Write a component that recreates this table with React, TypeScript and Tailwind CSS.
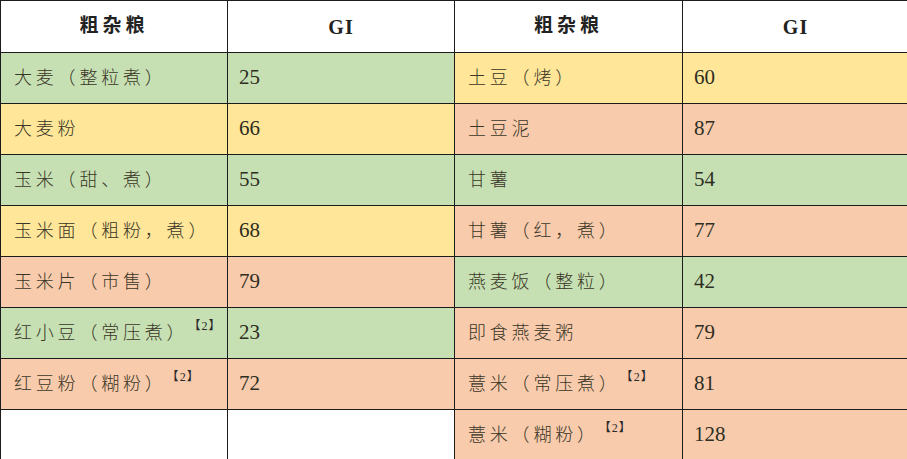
const GREEN = 'bg-[#c6e0b4]';
const YELLOW = 'bg-[#ffe699]';
const SALMON = 'bg-[#f8cbad]';

type Row = { name: string; note?: boolean; gi: string; color: string };

const left: Row[] = [
  { name: '大麦（整粒煮）', gi: '25', color: GREEN },
  { name: '大麦粉', gi: '66', color: YELLOW },
  { name: '玉米（甜、煮）', gi: '55', color: GREEN },
  { name: '玉米面（粗粉，煮）', gi: '68', color: YELLOW },
  { name: '玉米片（市售）', gi: '79', color: SALMON },
  { name: '红小豆（常压煮）', note: true, gi: '23', color: GREEN },
  { name: '红豆粉（糊粉）', note: true, gi: '72', color: SALMON },
  { name: '', gi: '', color: 'bg-white' },
];

const right: Row[] = [
  { name: '土豆（烤）', gi: '60', color: YELLOW },
  { name: '土豆泥', gi: '87', color: SALMON },
  { name: '甘薯', gi: '54', color: GREEN },
  { name: '甘薯（红，煮）', gi: '77', color: SALMON },
  { name: '燕麦饭（整粒）', gi: '42', color: GREEN },
  { name: '即食燕麦粥', gi: '79', color: SALMON },
  { name: '薏米（常压煮）', note: true, gi: '81', color: SALMON },
  { name: '薏米（糊粉）', note: true, gi: '128', color: SALMON },
];

const cjk = "font-['Liberation_Serif','Noto_Sans_CJK_SC',serif]";
const cell = 'border-t-[1.5px] border-l-[1.5px] border-[#1c1c1c] flex items-center';

function NameCell({ row }: { row: Row }) {
  return (
    <div className={`${cell} ${row.color} pl-[13px] text-[18px] tracking-[3.8px] text-[#3a3626] font-light ${cjk}`}>
      <span>{row.name}</span>
      {row.note && (
        <span className="-mt-[14px] text-[12px] leading-none tracking-normal font-normal text-[#2a2a2a] whitespace-nowrap">
          【<span className="mx-[1px]">2</span>】
        </span>
      )}
    </div>
  );
}

function GiCell({ row }: { row: Row }) {
  return (
    <div className={`${cell} ${row.color} pl-[11px] text-[21px] text-[#2e2e22] font-['Liberation_Serif',serif]`}>
      {row.gi}
    </div>
  );
}

export default function App() {
  return (
    <div className="w-[907px] h-[459px] overflow-hidden bg-white">
      <div className="grid grid-cols-[227px_227px_228px_226px] grid-rows-[52px_repeat(8,51px)]">
        {[0, 1].map((k) => (
          <>
            <div key={`h${k}a`} className={`${cell} justify-center text-[19px] tracking-[4px] font-bold text-[#222] ${cjk}`}>
              粗杂粮
            </div>
            <div key={`h${k}b`} className={`${cell} justify-center text-[20px] tracking-[1px] font-bold text-[#222] font-['Liberation_Serif',serif]`}>
              GI
            </div>
          </>
        ))}
        {left.map((l, i) => {
          const r = right[i];
          return (
            <>
              <NameCell key={`l${i}`} row={l} />
              <GiCell key={`lg${i}`} row={l} />
              <NameCell key={`r${i}`} row={r} />
              <GiCell key={`rg${i}`} row={r} />
            </>
          );
        })}
      </div>
    </div>
  );
}
